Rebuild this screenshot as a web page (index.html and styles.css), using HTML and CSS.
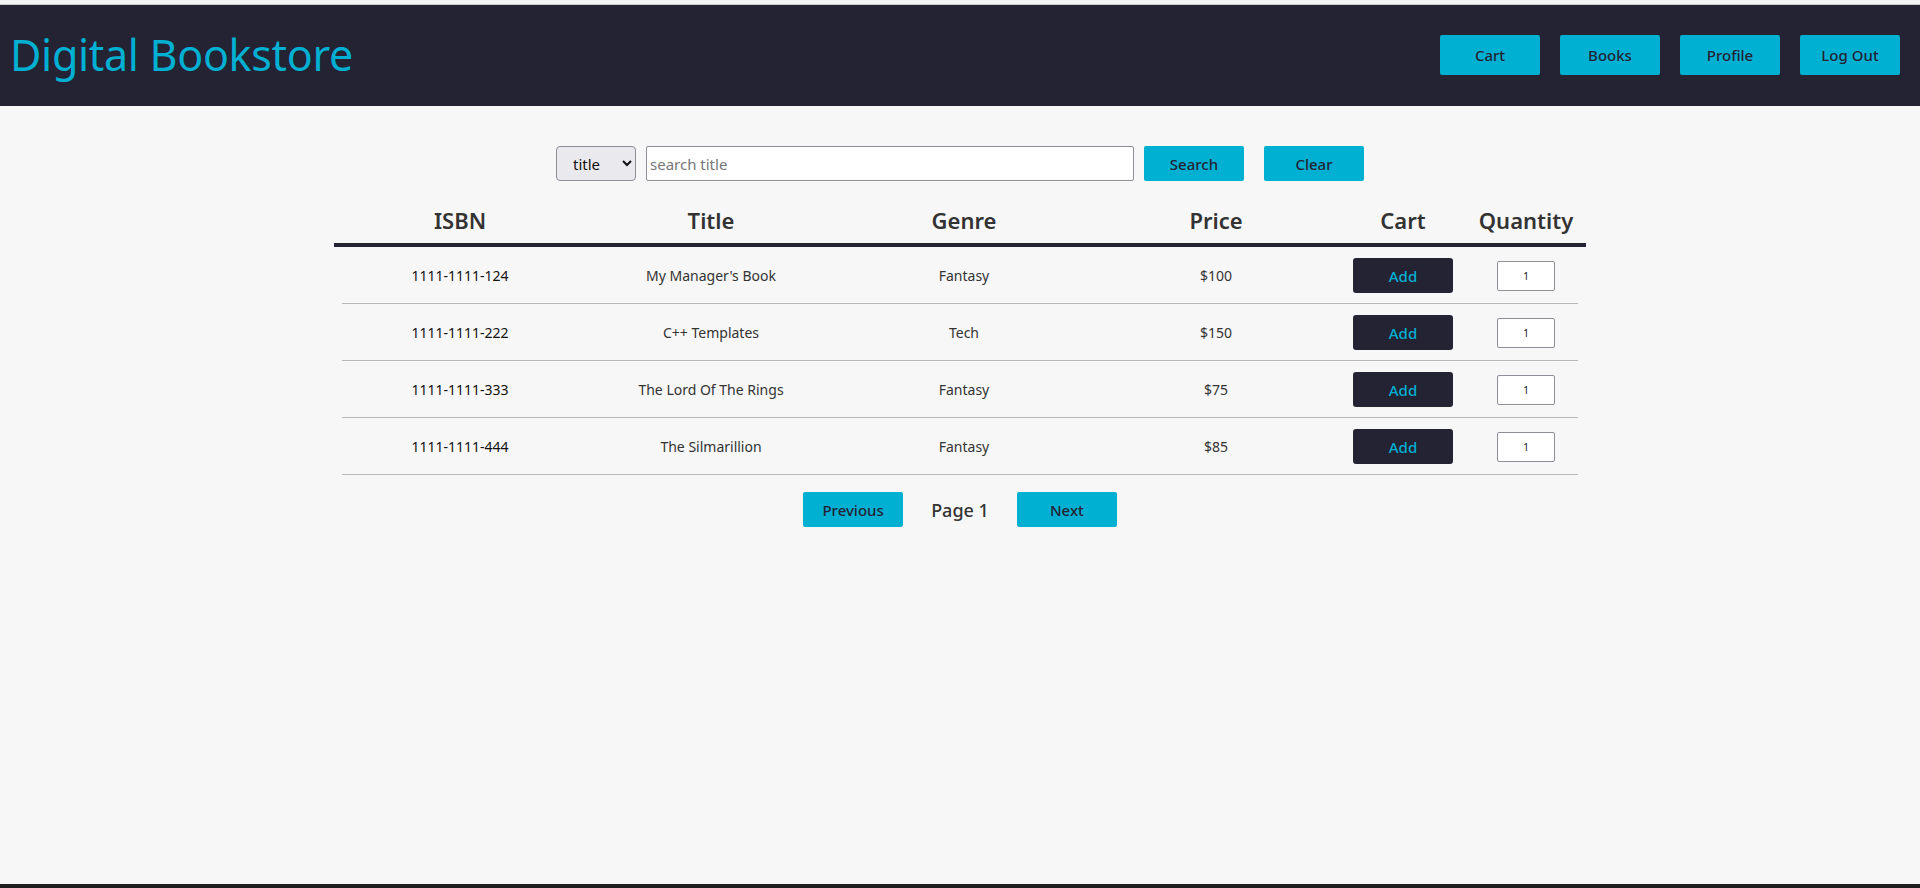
FILE: index.html
```html
<!DOCTYPE html>
<html lang="en">
<head>
<meta charset="utf-8">
<title>Digital Bookstore</title>
<link rel="stylesheet" href="styles.css">
</head>
<body>
<div class="topstrip"></div>
<header class="topbar">
  <h1 class="brand">Digital Bookstore</h1>
  <nav class="nav">
    <button class="btn">Cart</button>
    <button class="btn">Books</button>
    <button class="btn">Profile</button>
    <button class="btn">Log Out</button>
  </nav>
</header>
<main class="main">
  <div class="search">
    <select class="sel"><option>title</option></select>
    <input class="query" type="text" placeholder="search title">
    <button class="btn sbtn">Search</button>
    <button class="btn sbtn clear">Clear</button>
  </div>
  <div class="table">
    <div class="thead">
      <div>ISBN</div><div>Title</div><div>Genre</div><div>Price</div><div>Cart</div><div>Quantity</div>
    </div>
    <div class="row">
      <div class="isbn">1111-1111-124</div><div>My Manager's Book</div><div>Fantasy</div><div>$100</div>
      <div><button class="add">Add</button></div><div><input class="qty" value="1"></div>
    </div>
    <div class="row">
      <div class="isbn">1111-1111-222</div><div>C++ Templates</div><div>Tech</div><div>$150</div>
      <div><button class="add">Add</button></div><div><input class="qty" value="1"></div>
    </div>
    <div class="row">
      <div class="isbn">1111-1111-333</div><div>The Lord Of The Rings</div><div>Fantasy</div><div>$75</div>
      <div><button class="add">Add</button></div><div><input class="qty" value="1"></div>
    </div>
    <div class="row">
      <div class="isbn">1111-1111-444</div><div>The Silmarillion</div><div>Fantasy</div><div>$85</div>
      <div><button class="add">Add</button></div><div><input class="qty" value="1"></div>
    </div>
  </div>
  <div class="pager">
    <button class="btn">Previous</button>
    <span class="page">Page 1</span>
    <button class="btn">Next</button>
  </div>
</main>
<div class="bottomstrip"></div>
</body>
</html>
```

FILE: styles.css
```css
* { box-sizing: border-box; }
html, body { height: 100%; }
body {
  margin: 0;
  background: #f7f7f7;
  font-family: "Noto Sans", "Open Sans", sans-serif;
  color: #333;
  display: flex;
  flex-direction: column;
}
.topstrip {
  height: 5px;
  background: #f3f3f3;
  border-bottom: 1px solid #cfcfcf;
}
.topbar {
  height: 101px;
  background: #232334;
  display: flex;
  align-items: center;
  justify-content: space-between;
  padding: 0 20px 2px 10px;
}
.brand {
  margin: 0;
  font-weight: 400;
  font-size: 43px;
  color: #00b0d3;
  letter-spacing: -0.3px;
}
.nav {
  display: flex;
  gap: 20px;
}
.btn {
  width: 100px;
  height: 40px;
  border: none;
  border-radius: 2px;
  background: #00b0d3;
  color: #232334;
  font-family: "Noto Sans", sans-serif;
  font-size: 15px;
  font-weight: 500;
  padding: 0;
}
.main {
  flex: 1;
  display: flex;
  flex-direction: column;
  align-items: center;
  padding-top: 40px;
}
.search {
  display: flex;
  align-items: center;
  height: 35px;
}
.sel {
  width: 80px;
  height: 35px;
  border: 1px solid #8e8e98;
  border-radius: 4px;
  background: #e9e9ee;
  color: #111;
  font-family: "Noto Sans", sans-serif;
  font-size: 15px;
  padding-left: 12px;
  margin-right: 10px;
}
.query {
  width: 488px;
  height: 35px;
  border: 1px solid #8e8e98;
  border-radius: 2px;
  background: #fff;
  font-family: "Noto Sans", sans-serif;
  font-size: 15px;
  padding: 0 3px;
  margin-right: 10px;
}
.query::placeholder { color: #777; }
.sbtn { height: 35px; }
.clear { margin-left: 20px; }
.table {
  width: 1252px;
  margin-top: 13px;
}
.thead {
  display: grid;
  grid-template-columns: 252px 250px 256px 248px 126px 120px;
  height: 53px;
  border-bottom: 4px solid #232334;
  font-size: 22px;
  font-weight: 600;
  color: #333;
  align-items: center;
  text-align: center;
  padding-top: 3px;
}
.row {
  display: grid;
  grid-template-columns: 252px 250px 256px 248px 126px 120px;
  height: 57px;
  align-items: center;
  text-align: center;
  font-size: 14px;
  color: #333;
  background: linear-gradient(#b8b8b8, #b8b8b8) no-repeat center bottom / calc(100% - 16px) 1px;
}
.isbn { color: #111; }
.add {
  width: 100px;
  height: 35px;
  border: none;
  border-radius: 3px;
  background: #232334;
  color: #00b0d3;
  font-family: "Noto Sans", sans-serif;
  font-size: 15px;
  font-weight: 500;
  padding: 0;
  vertical-align: middle;
}
.qty {
  width: 58px;
  height: 30px;
  border: 1px solid #8e8e98;
  border-radius: 2px;
  background: #fff;
  text-align: center;
  font-family: "Noto Sans", sans-serif;
  font-size: 10px;
  color: #111;
  vertical-align: middle;
}
.pager {
  display: flex;
  align-items: center;
  gap: 28px;
  margin-top: 17px;
}
.pager .btn { height: 35px; }
.page {
  font-size: 18px;
  font-weight: 500;
  color: #333;
}
.bottomstrip {
  height: 4px;
  background: #1f1f1f;
}
```
